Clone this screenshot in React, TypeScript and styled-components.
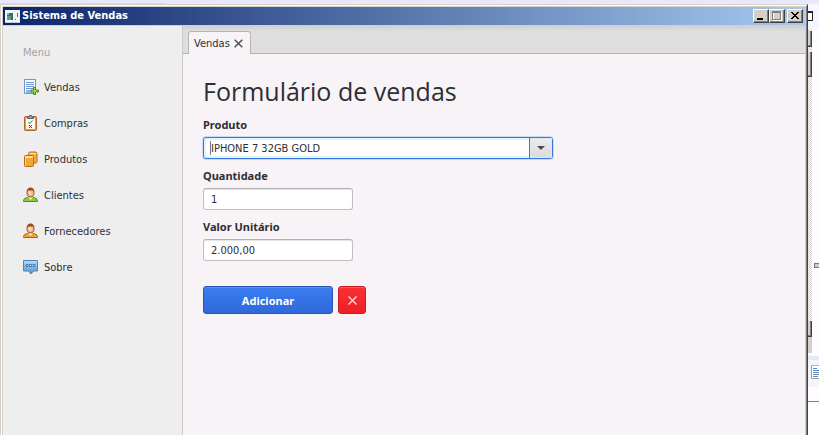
import React from "react";
import styled, { createGlobalStyle } from "styled-components";

const GlobalStyle = createGlobalStyle`
  *, *::before, *::after { box-sizing: border-box; }
  body {
    margin: 0;
    background: #fefcfe;
    color: #2e2e32;
    font-family: "DejaVu Sans Condensed", "Noto Sans", sans-serif;
    font-size: 11px;
  }
  button, input, select { font: inherit; color: inherit; margin: 0; }
`;

const Desktop = styled.div`
  display: flex;
  flex-direction: column;
  min-height: 100vh;
`;
const TopStrip = styled.div`
  height: 4px;
  flex: none;
  background: linear-gradient(90deg, #d9dbe6 0 166px, #eaecfd 166px) 0 3px / 100% 1px no-repeat, #e7e8fc;
`;
const Workspace = styled.div`
  display: flex;
  flex: 1;
`;

const Window = styled.main`
  flex: 1;
  min-width: 0;
  display: flex;
  flex-direction: column;
  border-top: 1px solid #d4d0c8;
  border-left: 1px solid #d4d0c8;
  border-right: 1px solid #404040;
  box-shadow: inset 1px 1px #fff, inset -1px 0 #808080;
  padding: 2px 2px 0;
  background: #d4d0c8;
`;
const TitleBar = styled.header`
  height: 18px;
  flex: none;
  display: flex;
  align-items: center;
  padding: 0 2px;
  gap: 2px;
  background: linear-gradient(90deg, #0a246a, #a6caf0);
  color: #fff;
`;
const Title = styled.h1`
  flex: 1;
  margin: 0;
  font-size: 11px;
  line-height: 18px;
  font-weight: bold;
`;
const CaptionButtons = styled.div`
  display: flex;
`;
const CaptionButton = styled.button<{ $apart?: boolean }>`
  width: 16px;
  height: 14px;
  padding: 0;
  margin-left: ${(p) => (p.$apart ? 2 : 0)}px;
  display: flex;
  border: 1px solid;
  border-color: #fff #404040 #404040 #fff;
  box-shadow: inset -1px -1px #808080;
  background: #d4d0c8;
`;

const Body = styled.div`
  flex: 1;
  display: flex;
  border-top: 1px solid #d4d0c8;
`;
const Sidebar = styled.nav`
  width: 180px;
  flex: none;
  padding: 18px 20px;
  background: #eee;
  border-right: 1px solid #c8c8c8;
`;
const MenuHeading = styled.h2`
  margin: 0 0 7px;
  font-size: 11px;
  line-height: 18px;
  font-weight: normal;
  color: #a4a4a4;
`;
const MenuList = styled.ul`
  list-style: none;
  margin: 0;
  padding: 0;
`;
const MenuLink = styled.a`
  height: 36px;
  display: flex;
  align-items: center;
  gap: 5px;
  color: inherit;
  text-decoration: none;
`;

const Content = styled.section`
  flex: 1;
  min-width: 0;
  display: flex;
  flex-direction: column;
  background: #f7f3f7;
`;
const TabBar = styled.div`
  height: 28px;
  flex: none;
  display: flex;
  align-items: flex-end;
  padding-left: 5px;
  background: linear-gradient(#d0d0d0, #dedede 5px);
  border-bottom: 1px solid #b4b4b4;
`;
const Tab = styled.div`
  height: 23px;
  margin-bottom: -1px;
  padding: 0 7px 0 5px;
  display: flex;
  align-items: center;
  gap: 4px;
  background: #f7f3f7;
  border: 1px solid #b4b4b4;
  border-bottom: 0;
  border-radius: 3px 3px 0 0;
`;
const TabClose = styled.button`
  display: flex;
  padding: 0;
  border: 0;
  background: none;
`;
const Form = styled.form`
  padding: 20px;
`;
const FormTitle = styled.h2`
  margin: 0 0 9px;
  font-family: "Open Sans", "Noto Sans", sans-serif;
  font-size: 25px;
  line-height: 34px;
  font-weight: normal;
`;
const Field = styled.div`
  margin-bottom: 9px;
`;
const Label = styled.label`
  display: block;
  line-height: 16px;
  margin-bottom: 4px;
  font-family: "Noto Sans", sans-serif;
  font-size: 11px;
  font-weight: bold;
`;
const TextInput = styled.input`
  display: block;
  width: 150px;
  height: 22px;
  padding: 0 7px;
  border: 1px solid #c0bec2;
  border-top-color: #b2b0b4;
  border-radius: 3px;
  background: #fff;
  box-shadow: inset 0 1px 1px #e4e4e4;
  outline: 0;
`;
const Combo = styled.div`
  position: relative;
  width: 350px;
  max-width: 100%;
  height: 22px;
  border: 1px solid #3577e6;
  border-radius: 3px;
  background: #fff;
  box-shadow: 0 0 0 1px #c9dafa, inset 0 0 0 2px #e2f4f8;
  &::before {
    content: "";
    position: absolute;
    left: 6px;
    top: 3px;
    width: 1px;
    height: 14px;
    background: #777;
  }
`;
const ComboSelect = styled.select`
  display: block;
  width: 100%;
  height: 20px;
  padding: 0 30px 0 7px;
  border: 0;
  background: none;
  appearance: none;
  outline: 0;
`;
const ComboArrow = styled.span`
  position: absolute;
  inset: 0 0 0 auto;
  width: 23px;
  display: flex;
  align-items: center;
  justify-content: center;
  pointer-events: none;
  border-left: 1px solid #3577e6;
  border-radius: 0 2px 2px 0;
  background: linear-gradient(#ededed, #dadada);
  box-shadow: inset 0 0 0 1px #dce7ee;
`;
const Actions = styled.div`
  display: flex;
  gap: 5px;
  margin-top: 25px;
`;
const ActionButton = styled.button<{ $danger?: boolean }>`
  width: ${(p) => (p.$danger ? 28 : 130)}px;
  height: 28px;
  padding: 0;
  display: flex;
  align-items: center;
  justify-content: center;
  border: 1px solid ${(p) => (p.$danger ? "#cb1c20" : "#2456b6")};
  border-radius: 3px;
  background: ${(p) => (p.$danger ? "linear-gradient(#fb3034, #ed2025)" : "linear-gradient(#3b7df0, #2f69da)")};
  box-shadow: inset 0 1px ${(p) => (p.$danger ? "#ff5558" : "#5590f4")};
  color: #fff;
  font-family: "Noto Sans", sans-serif;
  font-size: 11px;
  font-weight: bold;
`;

const Behind = styled.aside`
  width: 11px;
  flex: none;
  overflow: hidden;
  display: flex;
  flex-direction: column;
  background: #fefcfe;
`;
const BackToolbar = styled.div`
  height: 25px;
  padding-top: 7px;
  flex: none;
  background: #f5f6fe;
`;
const BackBox = styled.div`
  width: 5px;
  height: 10px;
  border: 1px solid #222;
  border-top-width: 2px;
  border-left: 0;
  background: #fff;
`;
const BackPane = styled.div`
  display: flex;
  justify-content: space-between;
  align-items: flex-start;
`;
const BackScroll = styled.div`
  width: 4px;
  padding-top: 2px;
  background: repeating-conic-gradient(#d4d0c8 0 25%, #fff 0 50%) 0 0 / 2px 2px;
`;
const BackThumb = styled.div<{ $height: number; $gap: number }>`
  height: ${(p) => p.$height}px;
  margin-bottom: ${(p) => p.$gap}px;
  background: #d4d0c8;
  border-right: 1px solid #404040;
  border-bottom: 1px solid #404040;
  box-shadow: inset -1px -1px #808080;
`;
const BackCorner = styled.div`
  height: 16px;
  background: #d4d0c8;
`;
const BackHandle = styled.div`
  width: 5px;
  height: 5px;
  margin-top: 234px;
  border: 1px solid #777;
  border-right: 0;
  background: #ccc;
`;
const BackTabs = styled.div`
  margin-top: 3px;
  height: 31px;
  padding: 5px 0 0 3px;
  border-top: 4px solid #e7e8f8;
  background: #f3f4fd;
`;
const BackLine = styled.div`
  flex: 1;
  border-top: 1px solid #808080;
  margin-top: 14px;
  background: #fff;
`;

const icon = { width: 16, height: 16, viewBox: "0 0 16 16", "aria-hidden": true } as const;

const AppIcon = () => (
  <svg width="15" height="13" viewBox="0 0 15 13" shapeRendering="crispEdges" aria-hidden>
    <path fill="#f4f4f4" d="M0 0h15v13H0z" />
    <path fill="#326b79" d="M2 3h6v7H2z" />
    <path fill="#58a57c" d="M2 6h4v4H2z" />
    <path fill="#85bdc0" d="M2 3h2v2H2z" />
    <path fill="#4a6a86" d="M10 9h1v1h-1zM12 3h1v4h-1z" />
    <path fill="#c7ced5" d="M0 12h15v1H0z" />
  </svg>
);
const VendasIcon = () => (
  <svg {...icon}>
    <path fill="#f5f9ff" stroke="#7893c8" d="M1.500.500h11v14h-11z" />
    <path stroke="#7095d4" d="M3 3.500h8M3 5.500h8M3 7.500h8M3 9.500h8" />
    <path fill="#84b8ec" d="M3 11h6v3H3z" />
    <path fill="#a8d848" stroke="#4d861e" d="M10.500 8.500h2v2.500h3v2h-3v2.500h-2v-2.500h-2.500v-2h2.500z" />
  </svg>
);
const ComprasIcon = () => (
  <svg {...icon}>
    <rect x="1.500" y="1.500" width="12" height="14" rx="1" fill="#e79b3e" stroke="#b16622" />
    <path fill="#faf8f2" d="M3 3h9v11H3z" />
    <path fill="#a5acb5" stroke="#555d68" d="M4.500 3.500V2h1.500l.5-1.500h2L9 2h1.500v1.500z" />
    <path fill="none" stroke="#3b8547" d="m5.500 7 1.300 1.500L9.500 5.500" />
    <path stroke="#b3252d" d="m6 10 3 3m0-3-3 3" />
  </svg>
);
const ProdutosIcon = () => (
  <svg {...icon}>
    <path fill="#f1b044" stroke="#b9711f" d="M5.500 2.500 6.500 1h6.500l1 1.500V11l-1 1H5.500z" />
    <path stroke="#ffe3a0" d="M6.500 2.500H13" />
    <rect x="1.500" y="4.500" width="9" height="11" rx="1" fill="#f2a73b" stroke="#b96b18" />
    <path fill="#ffdf98" d="M2 5h8v2H2z" />
    <path stroke="#ffd07b" d="M2.500 7v8" />
  </svg>
);
const PersonIcon = ({ body, edge }: { body: string; edge: string }) => (
  <svg {...icon}>
    <path fill={body} stroke={edge} d="M.500 14.500c0-2 .5-3 2.500-3.500l3-1h3l3 1c2 .5 2.500 1.500 2.500 3.500z" />
    <path fill="#fff1dc" d="M5 10h5l-2.500 3z" />
    <ellipse cx="7.500" cy="5.500" rx="3.500" ry="4.500" fill="#f2b985" stroke="#935127" />
    <path fill="#8f5229" d="M4 5c0-3 1.500-4.200 3.500-4.200S11 2 11 5l-1-1.500H5z" />
    <path fill="#ffe0b8" d="M5.800 4.500h2.400v3H5.800z" />
  </svg>
);
const SobreIcon = () => (
  <svg {...icon}>
    <defs>
      <linearGradient id="bubble" x2="0" y2="1">
        <stop stopColor="#b7dcf4" />
        <stop offset="1" stopColor="#4b93d3" />
      </linearGradient>
    </defs>
    <path fill="url(#bubble)" stroke="#4a86bd" d="M.500 1.500h14v10.500h-4l-2.500 3-2.500-3h-5z" />
    <path fill="#e3f4fd" stroke="#34618f" strokeWidth=".8" d="M3 5.500h2v2H3zM6.500 5.500h2v2h-2zM10 5.500h2v2h-2z" />
  </svg>
);
const DocIcon = () => (
  <svg width="14" height="14" viewBox="0 0 14 14" aria-hidden>
    <path fill="#fff" stroke="#a39c86" d="M.500.500h9l4 4v9H.500z" />
    <path stroke="#5f86bd" d="M2 3.500h4M2 5.500h8M2 7.500h8M2 9.500h8M2 11.500h5" />
    <path stroke="#d4b64e" d="M1 .500h8" />
  </svg>
);

const menu = [
  { name: "Vendas", glyph: <VendasIcon /> },
  { name: "Compras", glyph: <ComprasIcon /> },
  { name: "Produtos", glyph: <ProdutosIcon /> },
  { name: "Clientes", glyph: <PersonIcon body="#8ccc3b" edge="#4f8e22" /> },
  { name: "Fornecedores", glyph: <PersonIcon body="#f3a03a" edge="#ad651b" /> },
  { name: "Sobre", glyph: <SobreIcon /> },
];

export default function App() {
  return (
    <Desktop>
      <GlobalStyle />
      <TopStrip />
      <Workspace>
        <Window>
          <TitleBar>
            <AppIcon />
            <Title>Sistema de Vendas</Title>
            <CaptionButtons>
              <CaptionButton aria-label="Minimizar">
                <svg width="14" height="12" shapeRendering="crispEdges"><path d="M3 8h6v2H3z" /></svg>
              </CaptionButton>
              <CaptionButton aria-label="Maximizar">
                <svg width="14" height="12" shapeRendering="crispEdges">
                  <path fill="none" stroke="#fff" d="M3.500 2.500h8v8h-8z" />
                  <path fill="none" stroke="#808080" d="M2.500 1.500h8v8h-8zM3 2.500h7" />
                </svg>
              </CaptionButton>
              <CaptionButton aria-label="Fechar" $apart>
                <svg width="14" height="12" shapeRendering="crispEdges">
                  <path d="M3 2h2v1h1v1h2V3h1V2h2v1h-1v1H9v1H8v1h1v1h1v1h1v1H9V8H8V7H6v1H5v1H3V8h1V7h1V6h1V5H5V4H4V3H3z" />
                </svg>
              </CaptionButton>
            </CaptionButtons>
          </TitleBar>
          <Body>
            <Sidebar>
              <MenuHeading>Menu</MenuHeading>
              <MenuList>
                {menu.map((item) => (
                  <li key={item.name}>
                    <MenuLink href={"#" + item.name.toLowerCase()}>
                      {item.glyph}
                      {item.name}
                    </MenuLink>
                  </li>
                ))}
              </MenuList>
            </Sidebar>
            <Content>
              <TabBar>
                <Tab>
                  Vendas
                  <TabClose aria-label="Fechar aba">
                    <svg width="9" height="9" viewBox="0 0 9 9"><path stroke="#55555a" strokeWidth="1.600" d="m.700.700 7.600 7.600m0-7.600L.700 8.300" /></svg>
                  </TabClose>
                </Tab>
              </TabBar>
              <Form onSubmit={(e) => e.preventDefault()}>
                <FormTitle>Formulário de vendas</FormTitle>
                <Field>
                  <Label htmlFor="produto">Produto</Label>
                  <Combo>
                    <ComboSelect id="produto">
                      <option>IPHONE 7 32GB GOLD</option>
                    </ComboSelect>
                    <ComboArrow>
                      <svg width="8" height="4" viewBox="0 0 8 4"><path fill="#4a4a4e" d="M0 0h8L4 4z" /></svg>
                    </ComboArrow>
                  </Combo>
                </Field>
                <Field>
                  <Label htmlFor="quantidade">Quantidade</Label>
                  <TextInput id="quantidade" defaultValue="1" />
                </Field>
                <Field>
                  <Label htmlFor="valor">Valor Unitário</Label>
                  <TextInput id="valor" defaultValue="2.000,00" />
                </Field>
                <Actions>
                  <ActionButton type="submit">Adicionar</ActionButton>
                  <ActionButton type="button" $danger aria-label="Cancelar">
                    <svg width="9" height="9" viewBox="0 0 9 9"><path stroke="#ffe4e4" strokeWidth="1.200" d="m.500.500 8 8m0-8-8 8" /></svg>
                  </ActionButton>
                </Actions>
              </Form>
            </Content>
          </Body>
        </Window>
        <Behind>
          <BackToolbar><BackBox /></BackToolbar>
          <BackPane>
            <BackScroll>
              <BackThumb $height={16} $gap={5} />
              <BackThumb $height={25} $gap={244} />
              <BackThumb $height={16} $gap={0} />
              <BackCorner />
            </BackScroll>
            <BackHandle />
          </BackPane>
          <BackTabs><DocIcon /></BackTabs>
          <BackLine />
        </Behind>
      </Workspace>
    </Desktop>
  );
}
